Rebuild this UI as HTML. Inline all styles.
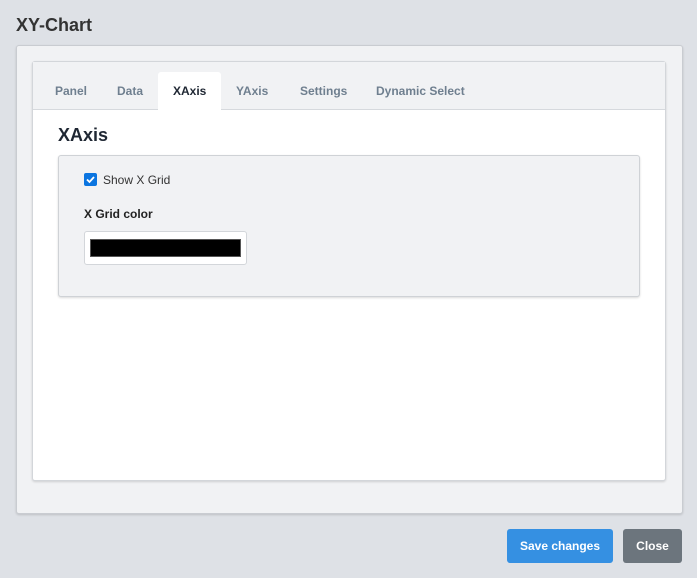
<!DOCTYPE html>
<html><head><style>
*{box-sizing:border-box;margin:0;padding:0}
body{width:697px;height:578px;background:#dee1e6;font-family:"Liberation Sans",Arial,sans-serif;position:relative;overflow:hidden}
.a{position:absolute}
.title{left:16px;top:15px;font-size:18px;font-weight:bold;color:#333}
.outer{left:16px;top:45px;width:667px;height:469px;background:#f1f2f4;border:1px solid #c9ccd1;border-radius:3px;box-shadow:0 1px 2px rgba(0,0,0,.15)}
.card{left:32px;top:61px;width:634px;height:420px;background:#fff;border:1px solid #d3d6da;border-radius:3px;box-shadow:0 1px 2px rgba(0,0,0,.15)}
.tabs{left:33px;top:62px;width:632px;height:48px;background:#f1f2f4;border-bottom:1px solid #d6d9dd}
.tab{top:84px;font-size:12px;font-weight:bold;color:#6f7f8f}
.act{left:158px;top:72px;width:63px;height:39px;background:#fff;border-radius:3px 3px 0 0}
.h{left:58px;top:125px;font-size:18px;font-weight:bold;color:#1f2733}
.box{left:58px;top:155px;width:582px;height:142px;background:#f1f2f4;border:1px solid #cfd2d6;border-radius:3px;box-shadow:0 1px 2px rgba(0,0,0,.15)}
.cb{left:84px;top:173px;width:13px;height:13px;background:#0b75e0;border-radius:2px}
.btn{top:529px;height:34px;border-radius:3px;color:#fff;font-size:12px;font-weight:bold;text-align:center;line-height:34px}
</style></head><body>
<div class="a title">XY-Chart</div>
<div class="a outer"></div>
<div class="a card"></div>
<div class="a tabs"></div>
<div class="a act"></div>
<div class="a tab" style="left:55px">Panel</div>
<div class="a tab" style="left:117px">Data</div>
<div class="a tab" style="left:173px;color:#1f2733">XAxis</div>
<div class="a tab" style="left:236px">YAxis</div>
<div class="a tab" style="left:300px">Settings</div>
<div class="a tab" style="left:376px">Dynamic Select</div>
<div class="a h">XAxis</div>
<div class="a box"></div>
<div class="a cb"><svg width="13" height="13" viewBox="0 0 13 13"><path d="M3 6.5l2.5 2.5 4.5-5" stroke="#fff" stroke-width="1.8" fill="none"/></svg></div>
<div class="a" style="left:103px;top:173px;font-size:12px;color:#333">Show X Grid</div>
<div class="a" style="left:84px;top:207px;font-size:12px;font-weight:bold;color:#222">X Grid color</div>
<div class="a" style="left:84px;top:231px;width:163px;height:34px;background:#fff;border:1px solid #d3d6da;border-radius:3px"></div>
<div class="a" style="left:90px;top:239px;width:151px;height:18px;background:#000;border:1px solid #555"></div>
<div class="a btn" style="left:507px;width:106px;background:#3590e2">Save changes</div>
<div class="a btn" style="left:623px;width:59px;background:#6c757d">Close</div>
</body></html>
